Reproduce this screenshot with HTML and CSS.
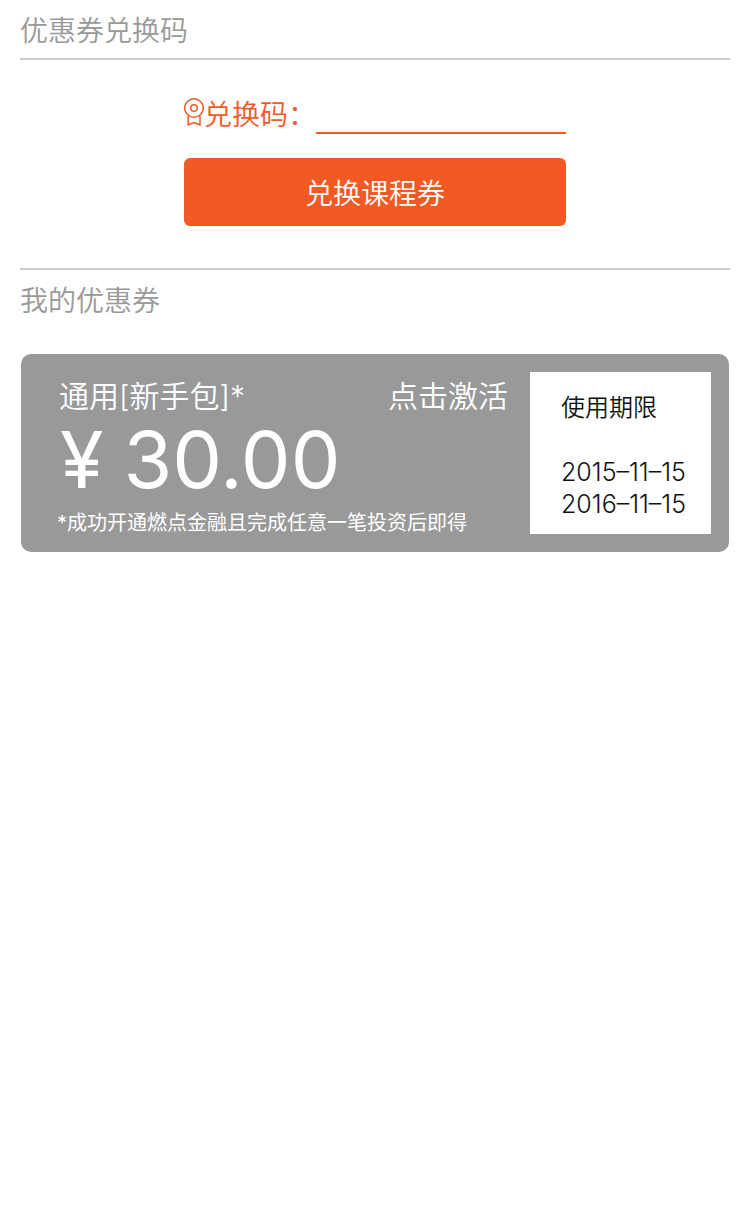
FILE: index.html
```
<!DOCTYPE html>
<html lang="zh-CN">
<head>
<meta charset="utf-8">
<meta name="viewport" content="width=device-width">
<title>优惠券兑换码</title>
<link rel="stylesheet" href="styles.css">
</head>
<body>
<main class="page">
  <section class="redeem">
    <h2 class="heading heading-ruled">优惠券兑换码</h2>
    <form class="redeem-form">
      <div class="code-row">
        <label class="code-label" for="code">
          <svg class="badge-icon" viewBox="0 0 20 30" aria-hidden="true">
            <circle cx="10" cy="11" r="9.3"/>
            <circle cx="10" cy="11" r="3.3"/>
            <path d="M4.2 18.5v9.3l5.8-2.3 6 2.3v-9.3"/>
          </svg>
          <span>兑换码：</span>
        </label>
        <input class="code-input" id="code" type="text">
      </div>
      <button class="redeem-button" type="button">兑换课程券</button>
    </form>
  </section>
  <section class="coupons">
    <h2 class="heading">我的优惠券</h2>
    <article class="coupon">
      <div class="coupon-main">
        <div class="coupon-top">
          <h3 class="coupon-title">通用[新手包]*</h3>
          <button class="activate" type="button">点击激活</button>
        </div>
        <p class="amount"><span>¥</span><span>30.00</span></p>
        <p class="note">*成功开通燃点金融且完成任意一笔投资后即得</p>
      </div>
      <div class="validity">
        <h4 class="validity-title">使用期限</h4>
        <time class="date">2015–11–15</time>
        <time class="date">2016–11–15</time>
      </div>
    </article>
  </section>
</main>
</body>
</html>
```
FILE: styles.css
```
* { box-sizing: border-box; }

body {
  margin: 0;
  background: #fff;
  font-family: Inter, "Noto Sans CJK SC", sans-serif;
  font-weight: 350;
}

h2, h3, h4, p { margin: 0; font-weight: inherit; }
button { border: 0; font: inherit; cursor: pointer; }

.page { padding: 0 20px; }

.heading {
  padding: 11px 0 7px;
  color: #999;
  font-size: 28px;
  line-height: 40px;
}

.heading-ruled { border-bottom: 2px solid #ccc; }

.redeem-form {
  display: flex;
  flex-direction: column;
  width: fit-content;
  margin: 0 auto;
  padding: 34px 0 42px;
  gap: 24px;
}

.code-row {
  display: flex;
  height: 40px;
}

.code-label {
  display: flex;
  width: 132px;
  color: #f25a25;
  font-size: 28px;
  line-height: 42px;
  white-space: nowrap;
}

.badge-icon {
  flex: none;
  width: 20px;
  height: 30px;
  margin-top: 3px;
  fill: none;
  stroke: currentColor;
  stroke-width: 1.5;
}

.code-input {
  width: 250px;
  height: 40px;
  padding: 0;
  border: 0;
  border-bottom: 2px solid #f25a25;
  border-radius: 0;
  outline: 0;
  background: none;
  color: #f25a25;
  font: inherit;
  font-size: 28px;
}

.redeem-button {
  height: 68px;
  border-radius: 6px;
  background: #f25a25;
  color: #fff;
  font-size: 28px;
}

.coupons { border-top: 2px solid #ccc; }

.coupon {
  display: flex;
  margin: 26px 1px 0;
  padding: 18px;
  border-radius: 10px;
  background: #999;
  color: #fff;
}

.coupon-main {
  flex: 1;
  padding: 0 22px 0 18px;
}

.coupon-top {
  display: flex;
  justify-content: space-between;
  padding-left: 2px;
}

.coupon-title, .activate {
  padding: 0;
  background: none;
  color: inherit;
  font-size: 30px;
  line-height: 48px;
}

.amount {
  display: flex;
  gap: 20px;
  margin-bottom: 14px;
  padding-left: 3px;
  font-size: 79px;
  font-weight: 400;
  line-height: 78px;
}

.note {
  font-size: 20px;
  font-weight: 400;
  line-height: 22px;
  white-space: nowrap;
}

.validity {
  width: 181px;
  padding: 16px 0 14px 31px;
  background: #fff;
  color: #111;
}

.validity-title {
  margin-bottom: 28px;
  font-size: 24px;
  line-height: 40px;
}

.date {
  display: block;
  font-size: 25px;
  line-height: 32px;
}
```
